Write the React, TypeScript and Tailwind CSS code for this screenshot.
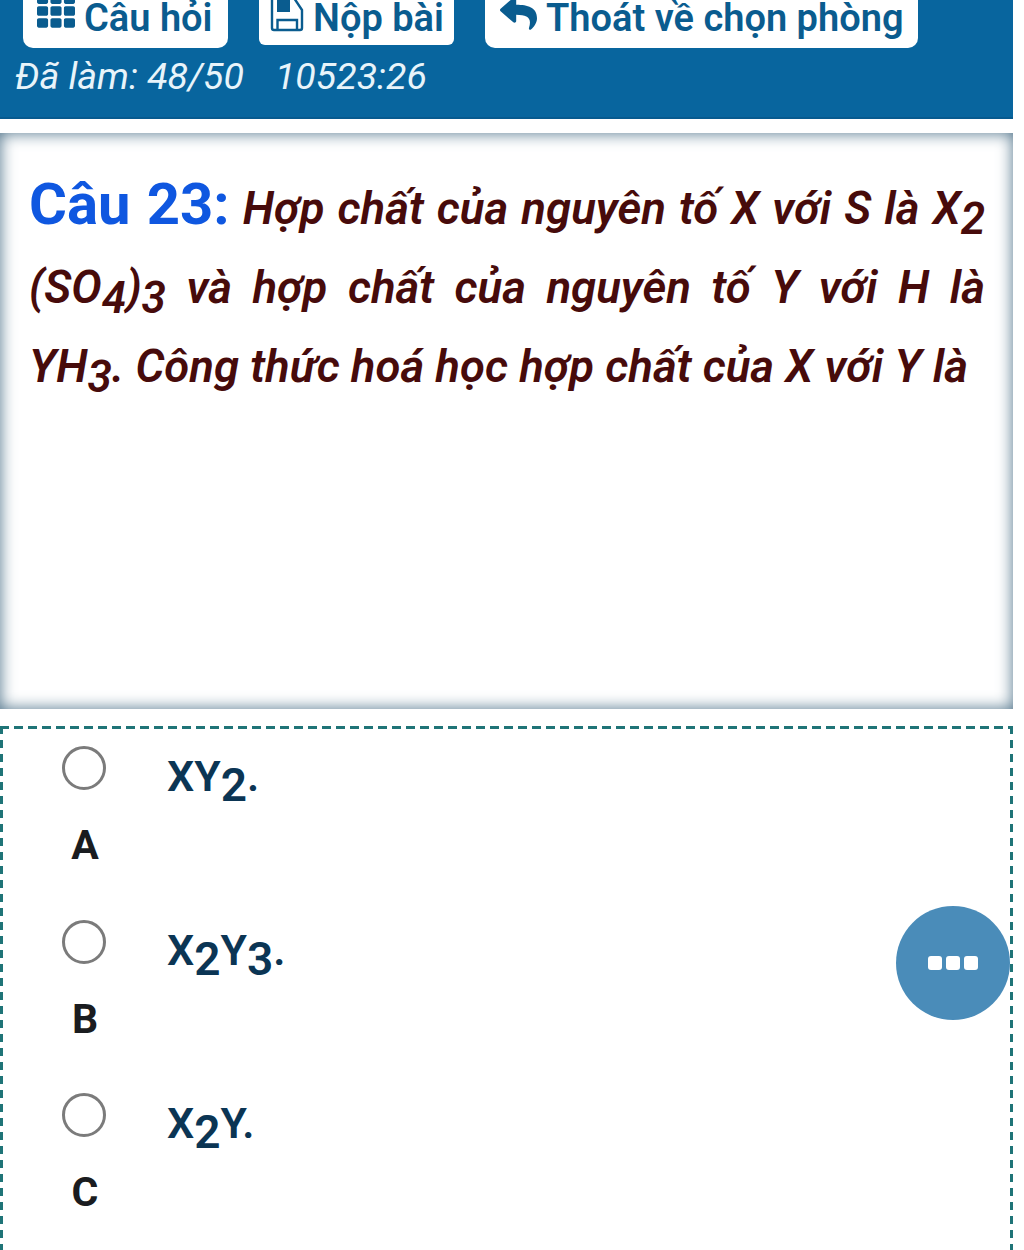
import { FaTh, FaReply } from 'react-icons/fa';

const optSub = 'text-[46px] align-[-10px] bottom-0 leading-none';

const options = [
  { label: 'A', body: <>XY<sub className={optSub}>2</sub>.</> },
  { label: 'B', body: <>X<sub className={optSub}>2</sub>Y<sub className={optSub}>3</sub>.</> },
  { label: 'C', body: <>X<sub className={optSub}>2</sub>Y.</> },
];

const subClass = 'text-[44px] align-[-10px] bottom-0 leading-none';

function SaveIcon() {
  return (
    <svg viewBox="0 0 34 32" className="w-[34px] h-[32px] shrink-0" fill="none" stroke="currentColor" strokeWidth="2.4">
      <path d="M2 -2V28a2 2 0 0 0 2 2H30a2 2 0 0 0 2-2V10L24 -2" strokeLinejoin="round" />
      <path d="M7 -1H20V12H7Z" fill="currentColor" stroke="none" />
      <path d="M7.5 30V20H27V30" />
    </svg>
  );
}

export default function App() {
  return (
    <div className="relative w-[1024px] h-[1250px] overflow-hidden bg-white font-['Roboto',sans-serif]">
      {/* thanh tren */}
      <div className="w-[1013px] h-[119px] bg-[#08659e] border-b-2 border-[#075a8f] overflow-hidden">
        <div className="flex items-start gap-[31px] pl-[23px]">
          <div className="w-[205px] h-[48px] bg-white rounded-b-[10px] flex items-start gap-[9px] pl-[14px] text-[#0a5c8f] text-[38px] leading-[36px] font-semibold">
            <FaTh className="w-[38px] h-[38px] -mt-[8px] shrink-0" />
            <span>Câu hỏi</span>
          </div>
          <div className="w-[195px] h-[45px] bg-white rounded-b-[6px] flex items-start gap-[9px] pl-[11px] text-[#0a5c8f] text-[38px] leading-[36px] font-semibold">
            <SaveIcon />
            <span>Nộp bài</span>
          </div>
          <div className="w-[433px] h-[48px] bg-white rounded-b-[10px] flex items-start gap-[9px] pl-[15px] text-[#0a5c8f] text-[38px] leading-[36px] font-semibold">
            <FaReply className="w-[37px] h-[37px] -mt-[5px] shrink-0" />
            <span>Thoát về chọn phòng</span>
          </div>
        </div>
        <div className="flex gap-[31px] pl-[15px] pt-[4px] text-[#e8f4fa] text-[37.5px] leading-[48px] italic">
          <span>Đã làm: 48/50</span>
          <span>10523:26</span>
        </div>
      </div>

      {/* cau hoi */}
      <div className="mt-[14px] w-[1013px] h-[576px] bg-white shadow-[inset_0_0_16px_#4d7188] pl-[29px] pr-[28px] pt-[36px]">
        <p className="text-[#470b0b] text-[45.5px] leading-[79px] italic font-semibold text-justify">
          <span className="text-[#0f57e0] text-[58px] leading-none font-bold not-italic">Câu 23:</span>{' '}
          Hợp chất của nguyên tố X với S là X<sub className={subClass}>2</sub> (SO<sub className={subClass}>4</sub>)<sub className={subClass}>3</sub> và hợp chất của nguyên tố Y với H là YH<sub className={subClass}>3</sub>. Công thức hoá học hợp chất của X với Y là
        </p>
      </div>

      {/* dap an */}
      <div className="mt-[17px] w-[1013px] h-[600px] pt-[20px] [background:repeating-linear-gradient(90deg,#1f7477_0_9px,transparent_9px_14px)_top/100%_3px_no-repeat,repeating-linear-gradient(180deg,#1f7477_0_8px,transparent_8px_14px)_left/3px_100%_no-repeat,repeating-linear-gradient(180deg,#1f7477_0_8px,transparent_8px_14px)_right/3px_100%_no-repeat]">
        {options.map((o) => (
          <div key={o.label} className="h-[173.5px]">
            <div className="flex items-start h-[44px]">
              <span className="ml-[62px] w-[44px] h-[44px] rounded-full border-[3px] border-[#7b7b7b] bg-white" />
              <span className="ml-[61px] mt-[8px] text-[#0b3554] text-[43px] leading-[44px] font-semibold">{o.body}</span>
            </div>
            <div className="w-[170px] pt-[31px] text-center text-[#1a1c20] text-[41px] leading-[48px] font-bold">{o.label}</div>
          </div>
        ))}
      </div>

      {/* nut noi */}
      <div className="absolute left-[896px] top-[906px] w-[114px] h-[114px] rounded-full bg-[#4a8cb9] flex items-center justify-center gap-[4px]">
        <span className="w-[14px] h-[14px] rounded-[3px] bg-white" />
        <span className="w-[14px] h-[14px] rounded-[3px] bg-white" />
        <span className="w-[14px] h-[14px] rounded-[3px] bg-white" />
      </div>
    </div>
  );
}
